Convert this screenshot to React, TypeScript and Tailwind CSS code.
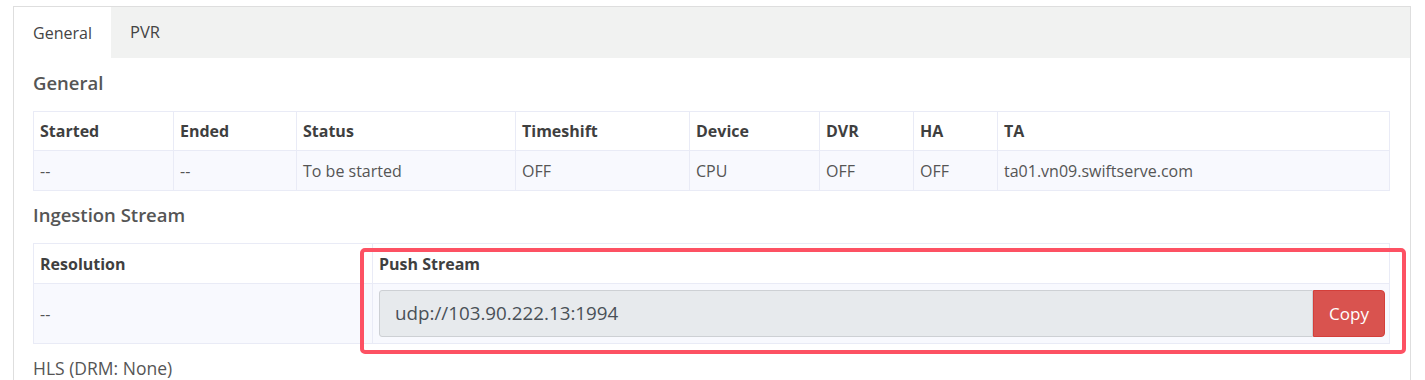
import React from 'react'

// ── Data ──────────────────────────────────────────────────────────────────────

const generalCols = [
  { label: 'Started', value: '--', w: 'w-[140px]' },
  { label: 'Ended', value: '--', w: 'w-[123px]' },
  { label: 'Status', value: 'To be started', w: 'w-[219px]' },
  { label: 'Timeshift', value: 'OFF', w: 'w-[174px]' },
  { label: 'Device', value: 'CPU', w: 'w-[130px]' },
  { label: 'DVR', value: 'OFF', w: 'w-[94px]' },
  { label: 'HA', value: 'OFF', w: 'w-[84px]' },
  { label: 'TA', value: 'ta01.vn09.swiftserve.com', w: '' },
]

const th = 'border border-[#e9ebf6] px-[6px] h-[39px] text-left font-bold text-[#3f3f3f]'
const td = 'border border-[#e9ebf6] px-[6px] font-normal text-[#555]'

export default function App() {
  return (
    <div className="min-h-[380px] bg-white pt-[6px] pl-[13px] text-[16px] text-[#555] font-['Open_Sans',sans-serif]">
      <div className="w-[1398px] h-[390px] border border-[#dedede]">
        {/* ── Tabs ── */}
        <div className="flex h-[51px] bg-[#f1f2f1]">
          <div className="flex w-[97px] items-center justify-center bg-white text-[#444]">General</div>
          <div className="flex items-center pl-[19px] text-[16.5px] text-[#444]">PVR</div>
        </div>

        <div className="px-[19px]">
          <h3 className="mt-[12px] mb-[16px] text-[18.5px] leading-[25px] font-semibold text-[#555]">General</h3>

          <table className="w-[1357px] table-fixed border-collapse">
            <thead>
              <tr>
                {generalCols.map(c => (
                  <th key={c.label} className={`${th} ${c.w}`}>{c.label}</th>
                ))}
              </tr>
            </thead>
            <tbody>
              <tr className="bg-[#f8f9fe]">
                {generalCols.map(c => (
                  <td key={c.label} className={`${td} h-[40px]`}>{c.value}</td>
                ))}
              </tr>
            </tbody>
          </table>

          <h3 className="mt-[11px] mb-[16px] text-[18.5px] leading-[25px] font-semibold text-[#555]">Ingestion Stream</h3>

          <div className="relative">
            <table className="w-[1357px] table-fixed border-collapse">
              <thead>
                <tr>
                  <th className={`${th} w-[339px] h-[40px]`}>Resolution</th>
                  <th className={`${th} h-[40px]`}>Push Stream</th>
                </tr>
              </thead>
              <tbody>
                <tr className="bg-[#f8f9fe]">
                  <td className={`${td} h-[60px]`}>--</td>
                  <td className={`${td} h-[60px] pr-[4px]`}>
                    <div className="flex h-[47px]">
                      <div className="flex flex-1 items-center rounded-l-[3px] border border-[#cdd0d4] bg-[#e7eaed] pl-[15px] text-[18.8px] text-[#495057]">
                        udp://103.90.222.13:1994
                      </div>
                      <button className="w-[72px] rounded-r-[4px] border border-[#d43f3a] bg-[#d9534f] text-[17px] text-white">
                        Copy
                      </button>
                    </div>
                  </td>
                </tr>
              </tbody>
            </table>

            {/* highlight annotation */}
            <div className="pointer-events-none absolute left-[327px] top-[5px] h-[106px] w-[1046px] rounded-[5px] border-[4px] border-[#fd5163]" />
          </div>

          <div className="mt-[12px] text-[17.5px] leading-[24px] text-[#555]">HLS (DRM: None)</div>
        </div>
      </div>
    </div>
  )
}
